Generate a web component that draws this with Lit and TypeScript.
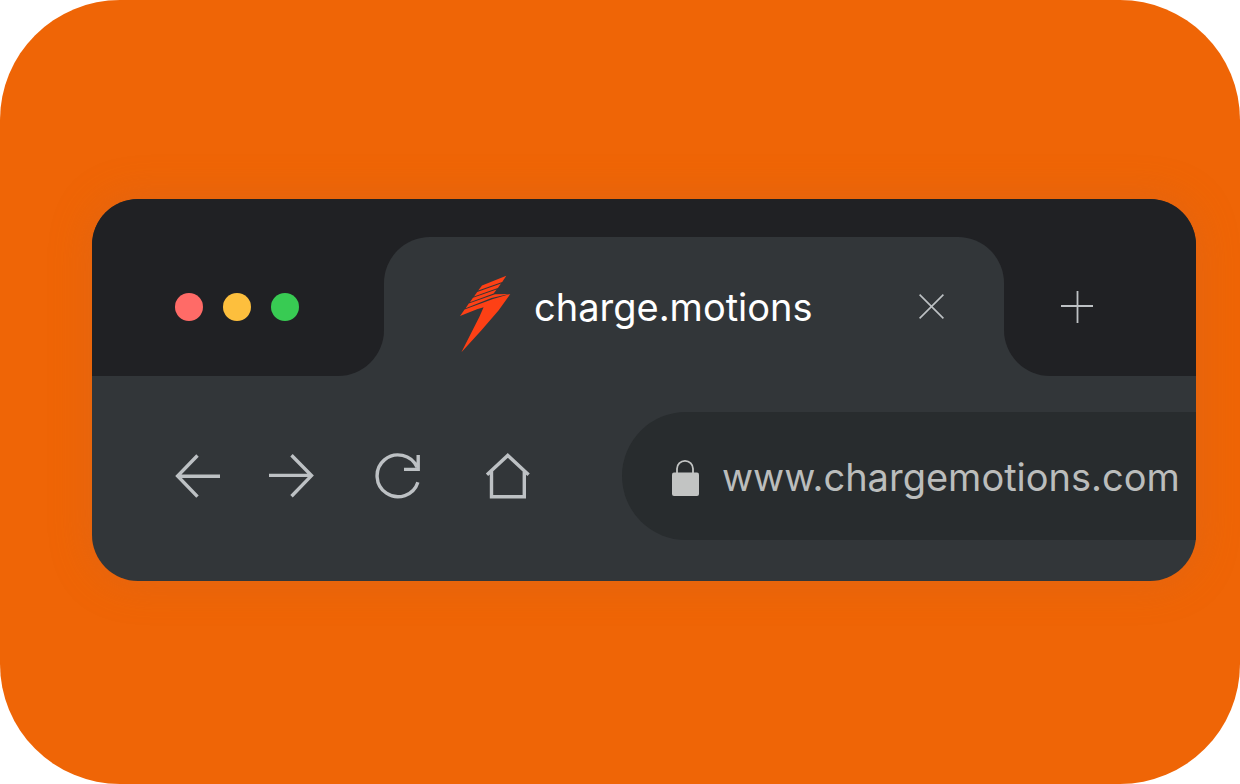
import { LitElement, html, css } from "lit";
import { customElement } from "lit/decorators.js";

@customElement("app-root")
export class AppRoot extends LitElement {
  static styles = css`
    :host {
      display: block;
      font-family: Inter, "Liberation Sans", sans-serif;
      --strip: #202124;
      --chrome: #323639;
      --field: #282c2e;
      --icon: #bdc1c4;
    }
    * {
      box-sizing: border-box;
    }
    .stage {
      min-height: 100vh;
      padding: 199px 44px 200px 92px;
      background: #ef6506;
      border-radius: 120px;
    }
    .window {
      border-radius: 46px;
      overflow: hidden;
      background: var(--chrome);
      box-shadow: 0 0 40px rgba(200, 100, 40, 0.35);
    }
    button {
      display: block;
      padding: 0;
      border: 0;
      background: none;
      color: var(--icon);
      cursor: pointer;
    }
    svg {
      display: block;
      flex: none;
      fill: none;
      stroke: currentColor;
    }
    .strip {
      display: grid;
      grid-template-columns: 292px minmax(0, 1fr) 192px;
      height: 177px;
    }
    .lights,
    .extra {
      display: flex;
      align-items: center;
      padding-top: 38px;
      background: var(--strip);
    }
    .lights {
      gap: 20px;
      padding-left: 83px;
      border-bottom-right-radius: 46px;
    }
    .extra {
      padding-left: 57px;
      border-bottom-left-radius: 46px;
    }
    .light {
      width: 28px;
      height: 28px;
      border-radius: 50%;
    }
    .red {
      background: #ff6b67;
    }
    .amber {
      background: #fdbf3d;
    }
    .green {
      background: #38cb53;
    }
    .slot {
      padding-top: 38px;
      background: var(--strip);
    }
    .tab {
      display: flex;
      align-items: center;
      height: 100%;
      padding: 0 60px 0 75px;
      background: var(--chrome);
      border-radius: 46px 46px 0 0;
    }
    .logo {
      fill: #fd4015;
      stroke: none;
    }
    .title {
      flex: 1;
      margin: 0 0 0 23px;
      color: #fff;
      font-size: 38px;
      font-weight: 400;
      line-height: 48px;
      white-space: nowrap;
    }
    .toolbar {
      display: grid;
      grid-template-columns: 94px 106px 110px 138px minmax(0, 1fr);
      align-items: center;
      padding: 36px 0 41px 82px;
    }
    .nav {
      width: 48px;
    }
    .address {
      display: flex;
      align-items: center;
      gap: 23px;
      height: 128px;
      padding-left: 50px;
      background: var(--field);
      border-radius: 64px 0 0 64px;
      color: #c2c4c3;
    }
    .url {
      flex: 1;
      min-width: 0;
      padding: 2px 0 0;
      border: 0;
      outline: 0;
      background: none;
      color: #bbbdbc;
      font: 400 38px/48px Inter, "Liberation Sans", sans-serif;
    }
  `;

  render() {
    return html`
      <main class="stage">
        <section class="window" aria-label="Browser">
          <div class="strip">
            <div class="lights">
              <button class="light red" aria-label="Close window"></button>
              <button class="light amber" aria-label="Minimize window"></button>
              <button class="light green" aria-label="Zoom window"></button>
            </div>
            <div class="slot">
              <div class="tab">
                <svg class="logo" width="52" height="92" viewBox="0 0 52 92" aria-hidden="true">
                  <path d="M23 24.4L47.3 14.8L43.2 21L19.2 29.6Z" />
                  <path d="M18.2 30.9L42 22.4L38.9 27L15 35.5Z" />
                  <path d="M14 36.8L37.6 28.4L34.6 32.6L10.9 41.2Z" />
                  <path d="M9.8 42.5L36 33.2L50 33L32.5 37L6.6 47.2Z" />
                  <path d="M51.3 33L34 38L5.6 48.4L1 55L18 48.2L24.6 46.2L20.3 56L2.4 91.2L22 69.7L39.5 49.5Z" />
                </svg>
                <h1 class="title">charge.motions</h1>
                <button aria-label="Close tab">
                  <svg width="25" height="25" viewBox="0 0 25 25" stroke-width="1.6">
                    <path d="M.6.6L24.4 24.4M24.4.6L.6 24.4" />
                  </svg>
                </button>
              </div>
            </div>
            <div class="extra">
              <button aria-label="New tab">
                <svg width="32" height="32" viewBox="0 0 32 32" stroke-width="1.8">
                  <path d="M16.5 0V32M0 15H32" />
                </svg>
              </button>
            </div>
          </div>
          <div class="toolbar">
            <button class="nav" aria-label="Back">
              <svg width="48" height="48" viewBox="0 0 48 48" stroke-width="3.4">
                <path d="M23.5 3.5L3.6 24L23.5 44.6M4 24.2H46" />
              </svg>
            </button>
            <button class="nav" aria-label="Forward">
              <svg width="48" height="48" viewBox="0 0 48 48" stroke-width="3.4">
                <path d="M23.5 3.3L43.5 23.6L23.5 44.2M1 23.4H43.5" />
              </svg>
            </button>
            <button class="nav" aria-label="Reload">
              <svg width="48" height="48" viewBox="0 0 48 48" stroke-width="3.4">
                <path d="M43.9 30.2A20.9 20.9 0 1 1 43 15.1M44.2 3V17.4H30" />
              </svg>
            </button>
            <button class="nav" aria-label="Home">
              <svg width="48" height="48" viewBox="0 0 48 48" stroke-width="3.4">
                <path d="M3 22.8L23.8 3.4L44.6 22.8M7.5 19.5V44.7H40.3V19.5" />
              </svg>
            </button>
            <div class="address">
              <svg width="27" height="40" viewBox="0 0 27 40" aria-hidden="true">
                <rect x="0" y="16.5" width="27" height="23.5" rx="2" fill="currentColor" stroke="none" />
                <path d="M5 17V12.8a8 8 0 0 1 16 0V17" stroke-width="1.8" />
              </svg>
              <input class="url" type="text" aria-label="Address" value="www.chargemotions.com" />
            </div>
          </div>
        </section>
      </main>
    `;
  }
}
